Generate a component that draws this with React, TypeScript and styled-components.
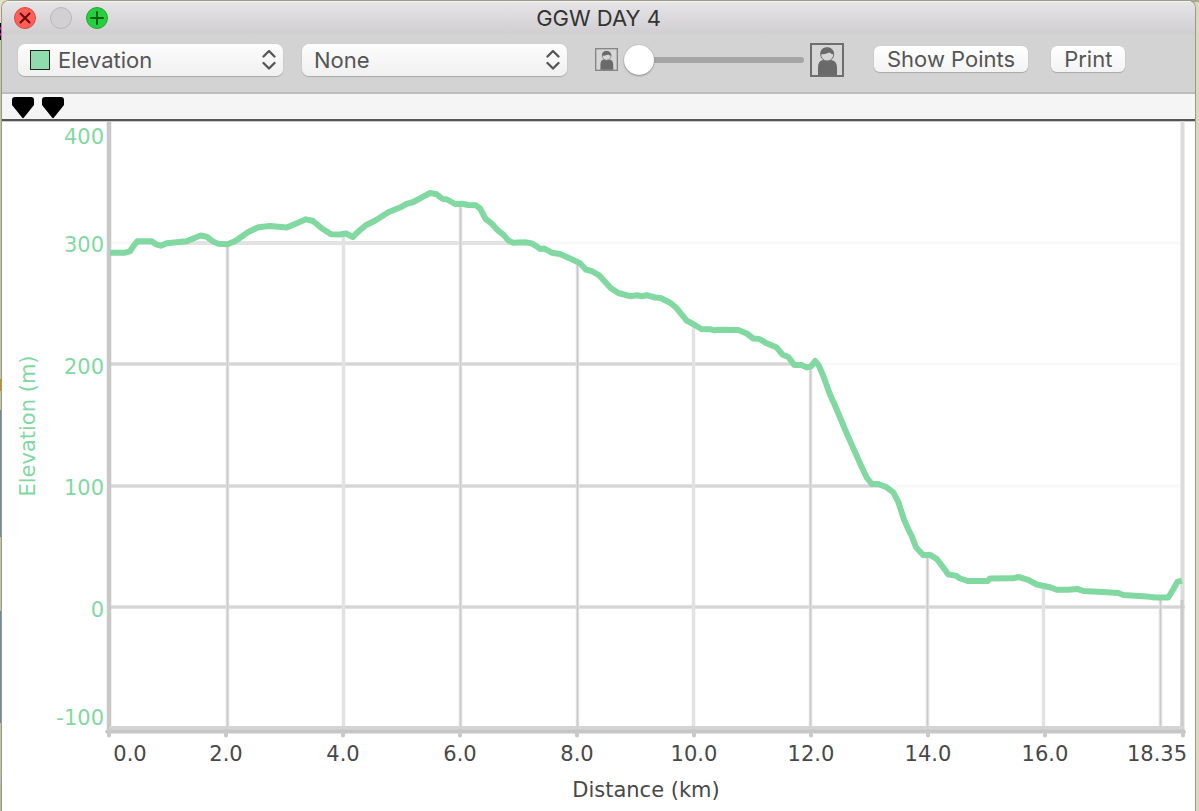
import React from "react";
import styled, { createGlobalStyle } from "styled-components";

const uiFont = `Inter, "Liberation Sans", sans-serif`;
const chartFont = `"DejaVu Sans", sans-serif`;
const green = "#82d8a1";

const GlobalStyle = createGlobalStyle`
  * { box-sizing: border-box; }
  body { margin: 0; background: #d9d7bd; }
`;

const Desktop = styled.div`
  padding: 1px 4px 0 2px;
  background:
    linear-gradient(90deg, #dfe0c0 58px, #000 58px 66px, #e000e0 66px 76px, #000 76px 85px,
      #e6e7c8 85px 400px, #d98a1c 400px 412px, #dfdfc4 412px 440px, #a9ab8c 500px) 0 0 / 100% 2px no-repeat,
    linear-gradient(180deg, #e6e0cd 23px, #000 23px 27px, #c800c8 27px 30px, #000 30px 33px, #c800c8 33px 36px,
      #000 36px 40px, #c6c3ad 40px 379px, #d98a1c 379px 391px, #c6c3ad 391px 410px, #6d87b3 410px 537px,
      #c6c3ad 537px 611px, #6d87b3 611px 723px, #c6c3ad 723px 773px, #bdbdbd 773px 785px, #b9b6a0 785px)
      0 0 / 2px 100% no-repeat,
    #dad8be;
`;

const Window = styled.main`
  border-radius: 7px 7px 0 0;
  background: #fff;
  overflow: hidden;
  box-shadow: 0 0 0 1px #9b9b84;
  font-family: ${uiFont};
`;

const TitleBar = styled.header`
  display: grid;
  grid-template-columns: 1fr auto 1fr;
  align-items: center;
  height: 33px;
  padding: 0 12px;
  border-top: 1px solid #f6f5f6;
  background: linear-gradient(#e6e4e6, #d0ced0);
`;

const Title = styled.h1`
  margin: 0;
  font-size: 22px;
  line-height: 32px;
  font-weight: 400;
  color: #333;
`;

const Lights = styled.div`
  display: flex;
  gap: 14px;
`;

const Light = styled.button<{ $fill: string; $edge: string }>`
  display: flex;
  width: 22px;
  height: 22px;
  padding: 0;
  align-items: center;
  justify-content: center;
  border: 1px solid ${(p) => p.$edge};
  border-radius: 50%;
  background: ${(p) => p.$fill};
`;

const Toolbar = styled.div`
  display: flex;
  align-items: center;
  height: 60px;
  padding: 0 16px 7px;
  border-bottom: 2px solid #bdbdbd;
  background: #d3d3d3;
`;

const Picker = styled.div`
  position: relative;
  flex: none;
  width: 265px;
  margin-right: 19px;
`;

const Select = styled.select<{ $inset: number }>`
  display: block;
  width: 100%;
  height: 32px;
  padding: 0 36px 0 ${(p) => p.$inset}px;
  appearance: none;
  border: 0;
  border-radius: 7px;
  background: linear-gradient(#fdfdfd, #f0f0f0);
  box-shadow: 0 1px 1px #a8a8a8, 0 0 1px #b4b4b4;
  font: 400 22px/32px ${uiFont};
  color: #555;
`;

const Swatch = styled.span`
  position: absolute;
  left: 12px;
  top: 6px;
  width: 20px;
  height: 20px;
  border: 1px solid #222;
  background: #8fdcad;
  pointer-events: none;
`;

const Arrows = styled.svg`
  position: absolute;
  right: 7px;
  top: 5px;
  pointer-events: none;
`;

const SizeControl = styled.div`
  display: flex;
  flex: none;
  align-items: center;
  margin: 0 30px 0 9px;
`;

const Slider = styled.input`
  width: 180px;
  height: 32px;
  margin: 0 6px;
  appearance: none;
  background: transparent;
  &::-webkit-slider-runnable-track {
    height: 6px;
    border-radius: 3px;
    background: #a5a5a5;
  }
  &::-webkit-slider-thumb {
    appearance: none;
    width: 30px;
    height: 30px;
    margin-top: -12px;
    border-radius: 50%;
    background: #fff;
    box-shadow: 0 1px 2px #8c8c8c, 0 0 1px #999;
  }
`;

const PushButton = styled.button`
  flex: none;
  height: 26px;
  margin: 0 23px 2px 0;
  padding: 0 13px;
  border: 0;
  border-radius: 6px;
  background: linear-gradient(#fff, #f3f3f3);
  box-shadow: 0 1px 1px #a8a8a8, 0 0 1px #b4b4b4;
  font: 400 22px/26px ${uiFont};
  color: #555;
`;

const MarkerStrip = styled.div`
  display: flex;
  align-items: flex-end;
  gap: 8px;
  height: 27px;
  padding: 0 10px;
  border-bottom: 2px solid #555;
  background: #f5f5f5;
`;

const Chart = styled.svg`
  display: block;
  width: 100%;
  height: auto;
  font-family: ${chartFont};
  font-size: 21px;
`;

const profile: [number, number][] = [
  [110, 252.7], [125, 252.7], [130, 251.3], [133, 246.7], [137.3, 241.3], [151.7, 241.3], [156, 244.3],
  [160.7, 245.7], [166.7, 243.3], [186.7, 241.3], [195, 237.7], [200.7, 235.5], [206.7, 236.7], [213.3, 241.7],
  [218.3, 243.7], [227.3, 244.3], [235, 241.3], [248.3, 232], [258.3, 227.3], [270, 226], [286.7, 227.5],
  [295, 224], [306, 219.3], [313, 221], [322, 228.5], [331, 234.3], [340, 234.5], [346, 233.5], [352.7, 237],
  [360, 230], [366.7, 224.7], [375, 220.7], [388.3, 212.3], [401.7, 206.7], [406.7, 203.9], [413.3, 202],
  [423.3, 196.7], [430, 193], [436.7, 194.3], [442.7, 199], [447.3, 199.5], [455, 204], [461.7, 203.7],
  [468.3, 205], [476, 205.3], [480, 208.3], [485.7, 219], [491.7, 223.6], [496.7, 229.3], [503.3, 234.6],
  [508.3, 240.4], [512.7, 242.7], [525, 242.2], [531.7, 243.4], [536.7, 246.3], [540, 249], [544.3, 248.6],
  [551.7, 252.7], [560, 254], [573.3, 260], [580, 263.2], [585.7, 269.5], [591.7, 271.2], [599.3, 275.4],
  [610.7, 288], [618.3, 293], [630, 296.2], [637.3, 295.2], [641.7, 296.2], [646.7, 295.2], [655, 297.5],
  [660.7, 298], [670, 302.7], [676, 307.5], [686.7, 320.7], [694, 324.5], [701.7, 329.2], [710, 329.2],
  [714.3, 330.4], [718.3, 329.8], [738.3, 330], [746.7, 333.5], [753.3, 338.5], [759.3, 339], [766.7, 343.3],
  [776.7, 347.6], [782.7, 354.7], [788.3, 357], [794.3, 365], [801.7, 365], [806.7, 367.4], [810.7, 366.6],
  [815.3, 361], [818.7, 365.3], [823.3, 376], [830, 394.5], [835, 405.5], [846.7, 433.3], [861.7, 467],
  [866.7, 477.5], [871.7, 484], [878.3, 484], [886.7, 487.3], [893.3, 492.3], [898.3, 502], [904, 519.5],
  [908.3, 529.3], [911.7, 536], [916, 547.3], [923.3, 555.3], [930, 554.7], [936.7, 559], [942.7, 566.7],
  [948.3, 574.5], [955.7, 575.6], [960, 578.5], [968.3, 581.1], [987.7, 581.1], [990, 578.4], [1013.3, 578.3],
  [1018.3, 577], [1028.3, 579.9], [1036.7, 584.5], [1050, 587.2], [1056.7, 589.8], [1068.3, 589.8],
  [1077.3, 588.9], [1083.3, 591], [1106.7, 592.2], [1118.3, 593], [1123.3, 595.1], [1146.7, 596.4],
  [1155, 597.5], [1168.3, 597.5], [1173.3, 589.3], [1177.3, 582], [1182, 580.7],
];
const line = profile.map(([x, y]) => `${x},${y}`).join(" ");
const area = `${line} 1185,580 1185,730 110,730`;

const yLabels: [string, number][] = [
  ["400", 144], ["300", 252], ["200", 374], ["100", 495], ["0", 617], ["-100", 725],
];
const xLabels: [string, number][] = [
  ["0.0", 130], ["2.0", 226], ["4.0", 343], ["6.0", 460], ["8.0", 577], ["10.0", 694],
  ["12.0", 811], ["14.0", 928], ["16.0", 1045], ["18.35", 1157],
];
const rows = [243, 364, 486, 607];
const columns = [227, 343, 460, 577, 693, 810, 927, 1043, 1160];
const ticks = [109, 226, 343, 460, 577, 694, 811, 928, 1045, 1183];

function Portrait({ size }: { size: number }) {
  const color = size > 30 ? "#6e6e6e" : "#858585";
  return (
    <svg width={size} height={size} viewBox="0 0 34 34" aria-hidden="true">
      <rect x="1" y="1" width="32" height="32" fill="#d6d6d6" stroke={color} strokeWidth="2" />
      <path d="M8 32V25Q8 17.500 13 17H21Q27 17.500 27 25V32Z" fill="#6a6a6a" />
      <ellipse cx="17.200" cy="11.500" rx="6.500" ry="6.500" fill="#d6d6d6" stroke="#747474" strokeWidth="1" />
      <path d="M10.300 11.500Q10 4.500 17 4.300Q24 4.500 24 11.500Q21.500 11.500 19.500 9.500Q15 11.500 10.300 11.500Z" fill="#6a6a6a" />
    </svg>
  );
}

function PopUp({ label, value, swatch }: { label: string; value: string; swatch?: boolean }) {
  return (
    <Picker>
      <Select aria-label={label} defaultValue={value} $inset={swatch ? 40 : 12}>
        <option>{value}</option>
      </Select>
      {swatch && <Swatch />}
      <Arrows width="14" height="22" viewBox="0 0 14 22" fill="none" stroke="#555" strokeWidth="2.300" strokeLinecap="round" strokeLinejoin="round">
        <path d="M1.500 7.500L7 2L12.500 7.500M1.500 14L7 19.500L12.500 14" />
      </Arrows>
    </Picker>
  );
}

function Marker() {
  return (
    <svg width="22" height="23" viewBox="0 0 22 23" aria-hidden="true">
      <path d="M3 1H19Q22 1 22 4V9L12 21.500Q11 22.800 10 21.500L0 9V4Q0 1 3 1Z" fill="#000" />
    </svg>
  );
}

function ElevationChart() {
  return (
    <Chart viewBox="2 121 1193 690" role="img" aria-label="Elevation by distance">
      <defs>
        <clipPath id="under-profile">
          <polygon points={area} />
        </clipPath>
      </defs>
      <path d="M2 121.500H1195" stroke="#ccc" />
      {rows.map((y) => (
        <path key={y} d={`M111 ${y}H1182`} stroke="#f8f8f8" strokeWidth="3" />
      ))}
      <path d="M1182.500 121V730" stroke="#dcdcdc" strokeWidth="4" />
      <g clipPath="url(#under-profile)">
        {rows.map((y) => (
          <g key={y}>
            <path d={`M111 ${y}H1185`} stroke="#e2e2e2" strokeWidth="4" />
            {y !== 243 && <path d={`M111 ${y}H1185`} stroke="#d0d0d0" strokeWidth="1.500" />}
          </g>
        ))}
        {columns.map((x, i) => (
          <g key={x}>
            <path d={`M${x}.500 121V728`} stroke="#e2e2e2" strokeWidth="3.500" />
            {i !== 1 && i !== 4 && i !== 7 && (
              <path d={`M${x}.500 121V728`} stroke="#cacaca" strokeWidth="1.400" />
            )}
          </g>
        ))}
      </g>
      <path d="M1182 600V730" stroke="#cacaca" strokeWidth="3" />
      <path d="M109 121V731" stroke="#c8c8c8" strokeWidth="4.500" />
      <path d="M109 728.500H1184" stroke="#d4d4d4" strokeWidth="5" />
      <path d="M107 731.700H1184" stroke="#c6c6c6" strokeWidth="3.700" strokeLinecap="round" />
      {ticks.map((x) => (
        <path key={x} d={`M${x} 731V735.500`} stroke="#c8c8c8" strokeWidth="4" strokeLinecap="round" />
      ))}
      <polyline points={line} fill="none" stroke={green} strokeWidth="6" strokeLinejoin="round" />
      {yLabels.map(([text, y]) => (
        <text key={text} x="104" y={y} textAnchor="end" fill={green}>{text}</text>
      ))}
      {xLabels.map(([text, x]) => (
        <text key={text} x={x} y="761" textAnchor="middle" fill="#484848">{text}</text>
      ))}
      <text transform="translate(35 426) rotate(-90)" textAnchor="middle" fill={green}>Elevation (m)</text>
      <text x="646" y="797" textAnchor="middle" fill="#484848">Distance (km)</text>
    </Chart>
  );
}

export default function App() {
  return (
    <Desktop>
      <GlobalStyle />
      <Window>
        <TitleBar>
          <Lights>
            <Light aria-label="Close" $fill="#ff5f57" $edge="#e2463f">
              <svg width="12" height="12" viewBox="0 0 12 12" stroke="#6b0805" strokeWidth="2" strokeLinecap="round">
                <path d="M1.500 1.500L10.500 10.500M10.500 1.500L1.500 10.500" />
              </svg>
            </Light>
            <Light aria-label="Minimize" $fill="#d2d0d2" $edge="#b9b7b9" />
            <Light aria-label="Zoom" $fill="#28cd41" $edge="#1dad2b">
              <svg width="14" height="14" viewBox="0 0 14 14" stroke="#056505" strokeWidth="2" strokeLinecap="round">
                <path d="M7 1V13M1 7H13" />
              </svg>
            </Light>
          </Lights>
          <Title>GGW DAY 4</Title>
        </TitleBar>
        <Toolbar>
          <PopUp label="Primary graph" value="Elevation" swatch />
          <PopUp label="Secondary graph" value="None" />
          <SizeControl>
            <Portrait size={23} />
            <Slider type="range" min="0" max="100" defaultValue="0" aria-label="Graph scale" />
            <Portrait size={34} />
          </SizeControl>
          <PushButton>Show Points</PushButton>
          <PushButton>Print</PushButton>
        </Toolbar>
        <MarkerStrip>
          <Marker />
          <Marker />
        </MarkerStrip>
        <ElevationChart />
      </Window>
    </Desktop>
  );
}
